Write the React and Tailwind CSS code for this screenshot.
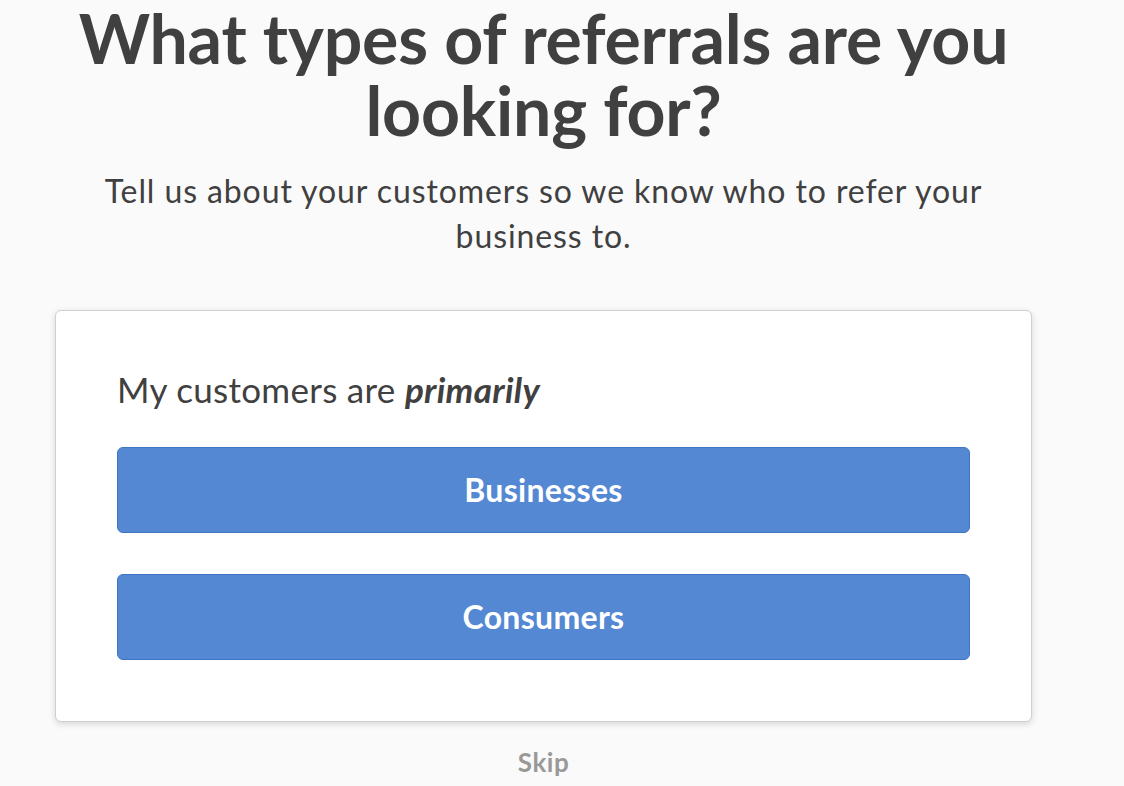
export default function App() {
  return (
    <div className="min-h-screen bg-[#fafafa] text-[#404040]" style={{ fontFamily: 'Lato, "Noto Sans", sans-serif' }}>
      <div className="ml-[55px] w-[977px] flex flex-col items-center">
        <h1 className="w-[977px] pt-[2px] text-center text-[68px] leading-[72px] font-bold tracking-[-0.2px]">
          What types of referrals are you looking for?
        </h1>
        <p className="mt-[22px] w-[910px] text-center text-[32px] leading-[45px] tracking-[0.9px]">
          Tell us about your customers so we know who to refer your business to.
        </p>
        <div className="mt-[52px] w-full rounded-[6px] border border-[#d0d0d0] bg-white px-[61px] pt-[56px] pb-[61px] shadow-[0_2px_6px_rgba(0,0,0,0.15)]">
          <p className="text-[35px] leading-[44px] tracking-[0.3px]">
            My customers are <em className="font-bold">primarily</em>
          </p>
          <div className="mt-[36px] flex flex-col gap-[41px]">
            <button className="h-[86px] w-full rounded-[6px] border border-[#3f74c6] bg-[#5588d3] text-[32px] font-bold text-white tracking-[0.3px]">
              Businesses
            </button>
            <button className="h-[86px] w-full rounded-[6px] border border-[#3f74c6] bg-[#5588d3] text-[32px] font-bold text-white tracking-[0.3px]">
              Consumers
            </button>
          </div>
        </div>
        <button className="mt-[24px] text-[26px] leading-[32px] font-bold text-[#999999] tracking-[0.5px]">Skip</button>
      </div>
    </div>
  );
}
